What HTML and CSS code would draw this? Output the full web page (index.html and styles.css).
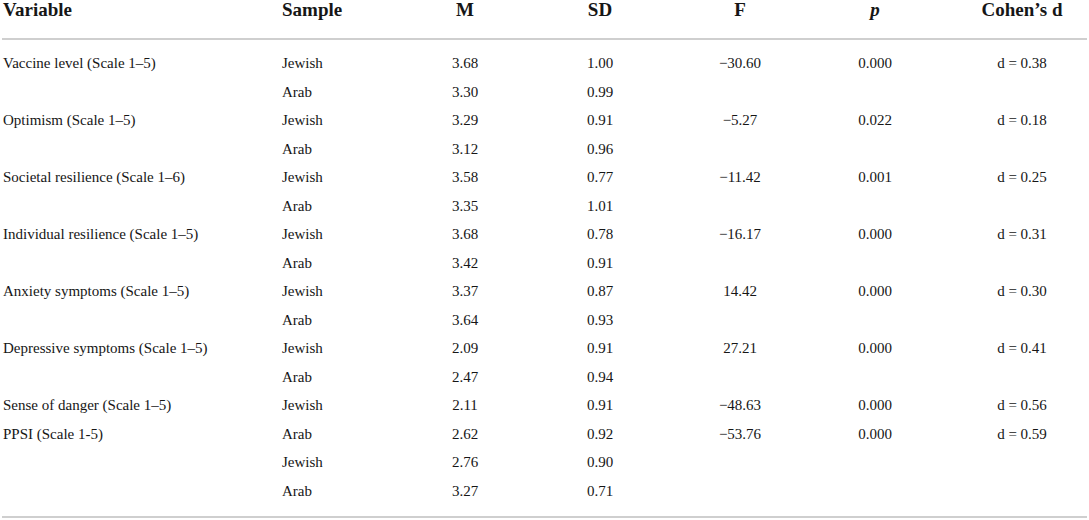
FILE: index.html
```html
<!DOCTYPE html>
<html lang="en">
<head>
    <meta charset="UTF-8">
    <title>Group comparison</title>
    <link rel="stylesheet" href="styles.css">
</head>
<body>

<div class="wrap">
    <table class="stats">
        <colgroup>
            <col class="c-var">
            <col class="c-sample">
            <col class="c-m">
            <col class="c-sd">
            <col class="c-f">
            <col class="c-p">
            <col class="c-d">
        </colgroup>
        <thead>
            <tr>
                <th class="left">Variable</th>
                <th class="left sample">Sample</th>
                <th>M</th>
                <th>SD</th>
                <th>F</th>
                <th><em>p</em></th>
                <th class="eff">Cohen’s d</th>
            </tr>
        </thead>
        <tbody>
            <tr>
                <td class="left">Vaccine level (Scale 1–5)</td>
                <td class="left sample">Jewish</td>
                <td>3.68</td><td>1.00</td><td>−30.60</td><td>0.000</td><td class="eff">d = 0.38</td>
            </tr>
            <tr>
                <td class="left"></td>
                <td class="left sample">Arab</td>
                <td>3.30</td><td>0.99</td><td></td><td></td><td class="eff"></td>
            </tr>
            <tr>
                <td class="left">Optimism (Scale 1–5)</td>
                <td class="left sample">Jewish</td>
                <td>3.29</td><td>0.91</td><td>−5.27</td><td>0.022</td><td class="eff">d = 0.18</td>
            </tr>
            <tr>
                <td class="left"></td>
                <td class="left sample">Arab</td>
                <td>3.12</td><td>0.96</td><td></td><td></td><td class="eff"></td>
            </tr>
            <tr>
                <td class="left">Societal resilience (Scale 1–6)</td>
                <td class="left sample">Jewish</td>
                <td>3.58</td><td>0.77</td><td>−11.42</td><td>0.001</td><td class="eff">d = 0.25</td>
            </tr>
            <tr>
                <td class="left"></td>
                <td class="left sample">Arab</td>
                <td>3.35</td><td>1.01</td><td></td><td></td><td class="eff"></td>
            </tr>
            <tr>
                <td class="left">Individual resilience (Scale 1–5)</td>
                <td class="left sample">Jewish</td>
                <td>3.68</td><td>0.78</td><td>−16.17</td><td>0.000</td><td class="eff">d = 0.31</td>
            </tr>
            <tr>
                <td class="left"></td>
                <td class="left sample">Arab</td>
                <td>3.42</td><td>0.91</td><td></td><td></td><td class="eff"></td>
            </tr>
            <tr>
                <td class="left">Anxiety symptoms (Scale 1–5)</td>
                <td class="left sample">Jewish</td>
                <td>3.37</td><td>0.87</td><td>14.42</td><td>0.000</td><td class="eff">d = 0.30</td>
            </tr>
            <tr>
                <td class="left"></td>
                <td class="left sample">Arab</td>
                <td>3.64</td><td>0.93</td><td></td><td></td><td class="eff"></td>
            </tr>
            <tr>
                <td class="left">Depressive symptoms (Scale 1–5)</td>
                <td class="left sample">Jewish</td>
                <td>2.09</td><td>0.91</td><td>27.21</td><td>0.000</td><td class="eff">d = 0.41</td>
            </tr>
            <tr>
                <td class="left"></td>
                <td class="left sample">Arab</td>
                <td>2.47</td><td>0.94</td><td></td><td></td><td class="eff"></td>
            </tr>
            <tr>
                <td class="left">Sense of danger (Scale 1–5)</td>
                <td class="left sample">Jewish</td>
                <td>2.11</td><td>0.91</td><td>−48.63</td><td>0.000</td><td class="eff">d = 0.56</td>
            </tr>
            <tr>
                <td class="left">PPSI (Scale 1-5)</td>
                <td class="left sample">Arab</td>
                <td>2.62</td><td>0.92</td><td>−53.76</td><td>0.000</td><td class="eff">d = 0.59</td>
            </tr>
            <tr>
                <td class="left"></td>
                <td class="left sample">Jewish</td>
                <td>2.76</td><td>0.90</td><td></td><td></td><td class="eff"></td>
            </tr>
            <tr>
                <td class="left"></td>
                <td class="left sample">Arab</td>
                <td>3.27</td><td>0.71</td><td></td><td></td><td class="eff"></td>
            </tr>
        </tbody>
    </table>
</div>

</body>
</html>
```

FILE: styles.css
```css
body {
    margin: 0;
    background-color: #fff;
    color: #161616;
    font-family: "Liberation Serif", "Times New Roman", serif;
}
.wrap {
    padding: 0 2px;
}
.stats {
    width: 1085px;
    table-layout: fixed;
    border-collapse: collapse;
    border-bottom: 2px solid #cfcfcf;
}
.c-var { width: 276px; }
.c-sample { width: 122px; }
.c-m { width: 130px; }
.c-sd { width: 140px; }
.c-f { width: 140px; }
.c-p { width: 130px; }
.c-d { width: 147px; }
.stats th, .stats td {
    padding: 0;
    text-align: center;
    white-space: nowrap;
}
.stats th {
    font-size: 19px;
    font-weight: bold;
    line-height: 20px;
    padding-bottom: 18px;
    vertical-align: top;
    border-bottom: 2px solid #cfcfcf;
}
.stats td {
    font-size: 15px;
    line-height: 28.5px;
}
.stats .left {
    text-align: left;
    padding-left: 1px;
}
.stats .sample {
    padding-left: 4px;
}
.stats .eff {
    padding-left: 17px;
}
.stats tbody tr:first-child td {
    padding-top: 9px;
}
.stats tbody tr:last-child td {
    padding-bottom: 11px;
}
```
